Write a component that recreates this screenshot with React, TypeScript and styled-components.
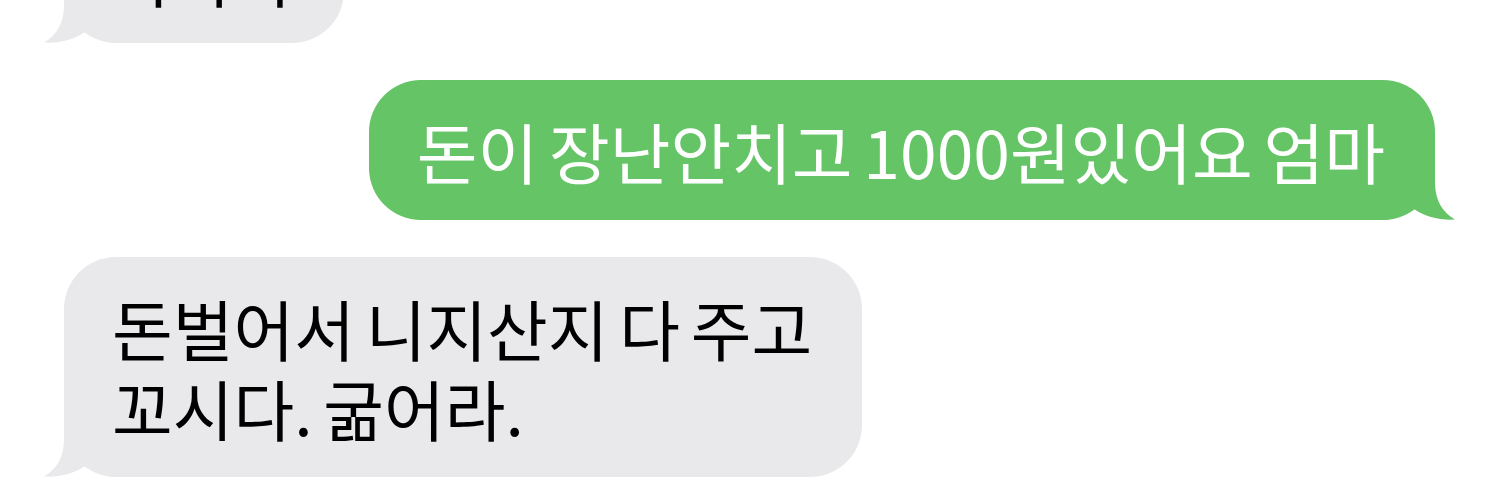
import styled, { createGlobalStyle } from "styled-components";

const GlobalStyle = createGlobalStyle`
  html, body {
    margin: 0;
    padding: 0;
    background: #ffffff;
    overflow: hidden;
  }
`;

const Thread = styled.div`
  width: 1499px;
  height: 499px;
  overflow: hidden;
  display: flex;
  flex-direction: column;
  gap: 37px;
  padding: 0 64px;
  box-sizing: border-box;
  font-family: "Noto Sans CJK KR", "Noto Sans", sans-serif;
`;

const Row = styled.div<{ $mine?: boolean; $cut?: number }>`
  display: flex;
  justify-content: ${(p) => (p.$mine ? "flex-end" : "flex-start")};
  margin-top: ${(p) => (p.$cut ? `-${p.$cut}px` : "0")};
`;

const Bubble = styled.div<{ $mine?: boolean }>`
  position: relative;
  padding: 30px 50px 30px 48px;
  border-radius: 52px;
  background: ${(p) => (p.$mine ? "#65c466" : "#e9e9eb")};
  color: ${(p) => (p.$mine ? "#ffffff" : "#000000")};
  font-size: 66px;
  line-height: 80px;
  word-spacing: -4px;
  white-space: pre-line;
`;

const Tail = styled.svg<{ $mine?: boolean }>`
  position: absolute;
  bottom: 0;
  width: 70px;
  height: 60px;
  ${(p) => (p.$mine ? "right: -20px; transform: scaleX(-1);" : "left: -20px;")}
`;

function BubbleTail({ mine }: { mine?: boolean }) {
  return (
    <Tail $mine={mine} viewBox="0 0 70 60">
      <path
        d="M20 0 L20 22 C20 40 13 52 0 59.5 C14 60.5 31 57 44 47 C52 54 60 58 70 60 L70 0 Z"
        fill={mine ? "#65c466" : "#e9e9eb"}
      />
    </Tail>
  );
}

function Message({ text, mine }: { text: string; mine?: boolean }) {
  return (
    <Bubble $mine={mine}>
      {text}
      <BubbleTail mine={mine} />
    </Bubble>
  );
}

export default function App() {
  return (
    <>
      <GlobalStyle />
      <Thread>
        <Row $cut={97}>
          <Message text="아아아" />
        </Row>
        <Row $mine>
          <Message mine text="돈이 장난안치고 1000원있어요 엄마" />
        </Row>
        <Row>
          <Message text={"돈벌어서 니지산지 다 주고\n꼬시다. 굶어라."} />
        </Row>
      </Thread>
    </>
  );
}
